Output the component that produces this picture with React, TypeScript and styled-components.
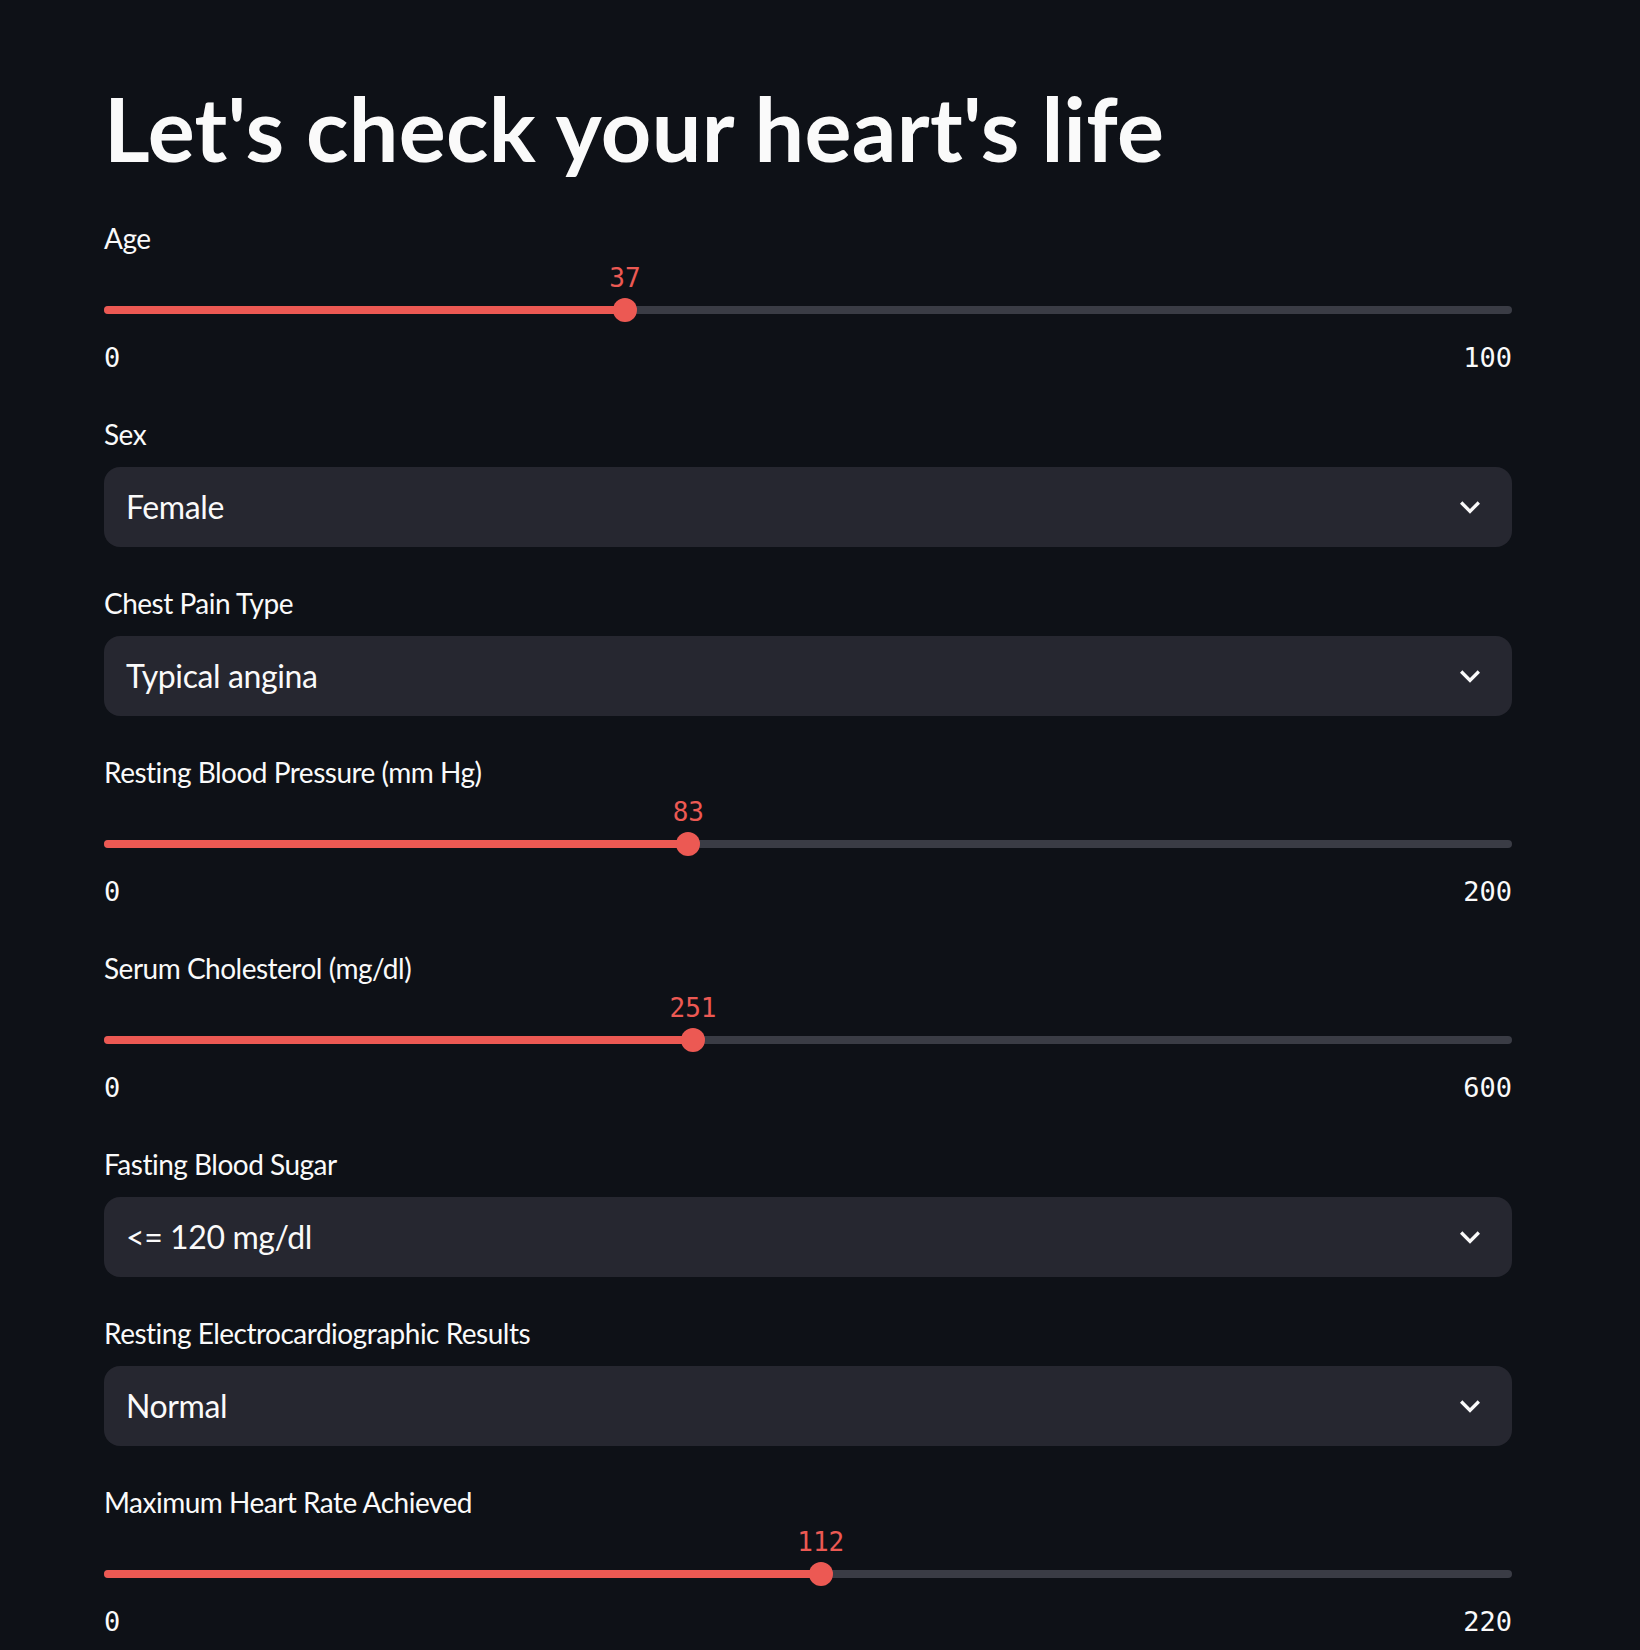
import React from "react";
import styled, { createGlobalStyle } from "styled-components";

const GlobalStyle = createGlobalStyle`
  html, body {
    margin: 0;
    padding: 0;
    background: #0e1117;
    color: #fafafa;
    font-family: "Source Sans Pro", Lato, "Noto Sans", sans-serif;
    overflow: hidden;
  }
  * { box-sizing: border-box; }
`;

const Page = styled.main`
  min-height: 1650px;
  background: #0e1117;
  padding: 76px 0 0 104px;
`;

const Column = styled.div`
  width: 1408px;
  display: flex;
  flex-direction: column;
  gap: 32px;
`;

const Title = styled.h1`
  margin: 0;
  font-family: "Source Sans Pro", Lato, sans-serif;
  font-weight: 700;
  font-size: 88px;
  line-height: 1.2;
  color: #fafafa;
  letter-spacing: 0.3px;
`;

const Label = styled.label`
  display: flex;
  align-items: center;
  height: 48px;
  font-size: 28px;
  letter-spacing: -0.5px;
  color: #fafafa;
  font-weight: 400;
`;

const SliderBlock = styled.div`
  display: flex;
  flex-direction: column;
  height: 164px;
`;

const TrackWrap = styled.div`
  position: relative;
  height: 24px;
  margin-top: 36px;
  display: flex;
  align-items: center;
`;

const Track = styled.div`
  position: relative;
  width: 100%;
  height: 8px;
  border-radius: 4px;
  background: #3a3c45;
`;

const Fill = styled.div`
  height: 100%;
  border-radius: 4px;
  background: #ec5953;
`;

const Thumb = styled.div`
  position: absolute;
  top: 0;
  width: 24px;
  height: 24px;
  border-radius: 50%;
  background: #ec5953;
  transform: translateX(-50%);
`;

const ThumbValue = styled.div`
  position: absolute;
  bottom: calc(100% + 6px);
  transform: translateX(-50%);
  font-family: "DejaVu Sans Mono", "Liberation Mono", monospace;
  font-size: 26px;
  line-height: 28px;
  color: #ec5953;
  white-space: nowrap;
`;

const Ticks = styled.div`
  margin-top: 22px;
  display: flex;
  justify-content: space-between;
  font-family: "DejaVu Sans Mono", "Liberation Mono", monospace;
  font-size: 27px;
  line-height: 28px;
  color: #fafafa;
`;

const SelectBlock = styled.div`
  display: flex;
  flex-direction: column;
  gap: 9px;
`;

const SelectBox = styled.div`
  height: 80px;
  border-radius: 16px;
  background: #262730;
  display: flex;
  align-items: center;
  justify-content: space-between;
  padding: 0 22px 0 22px;
  font-size: 32px;
  letter-spacing: -0.4px;
  color: #fafafa;
`;

const Chevron = () => (
  <svg width="40" height="40" viewBox="0 0 24 24" fill="#fafafa" aria-hidden>
    <path d="M16.59 8.59L12 13.17 7.41 8.59 6 10l6 6 6-6z" />
  </svg>
);

type SliderProps = { label: string; value: number; min: number; max: number };

const Slider = ({ label, value, min, max }: SliderProps) => {
  const pct = ((value - min) / (max - min)) * 100;
  return (
    <SliderBlock>
      <Label>{label}</Label>
      <TrackWrap>
        <Track>
          <Fill style={{ width: `${pct}%` }} />
        </Track>
        <Thumb style={{ left: `${pct}%` }} />
        <ThumbValue style={{ left: `${pct}%` }}>{value}</ThumbValue>
      </TrackWrap>
      <Ticks>
        <span>{min}</span>
        <span>{max}</span>
      </Ticks>
    </SliderBlock>
  );
};

const Select = ({ label, value }: { label: string; value: string }) => (
  <SelectBlock>
    <Label>{label}</Label>
    <SelectBox>
      <span>{value}</span>
      <Chevron />
    </SelectBox>
  </SelectBlock>
);

export default function App() {
  return (
    <>
      <GlobalStyle />
      <Page>
        <Column>
          <Title>Let's check your heart's life</Title>
          <Slider label="Age" value={37} min={0} max={100} />
          <Select label="Sex" value="Female" />
          <Select label="Chest Pain Type" value="Typical angina" />
          <Slider label="Resting Blood Pressure (mm Hg)" value={83} min={0} max={200} />
          <Slider label="Serum Cholesterol (mg/dl)" value={251} min={0} max={600} />
          <Select label="Fasting Blood Sugar" value="<= 120 mg/dl" />
          <Select label="Resting Electrocardiographic Results" value="Normal" />
          <Slider label="Maximum Heart Rate Achieved" value={112} min={0} max={220} />
        </Column>
      </Page>
    </>
  );
}
